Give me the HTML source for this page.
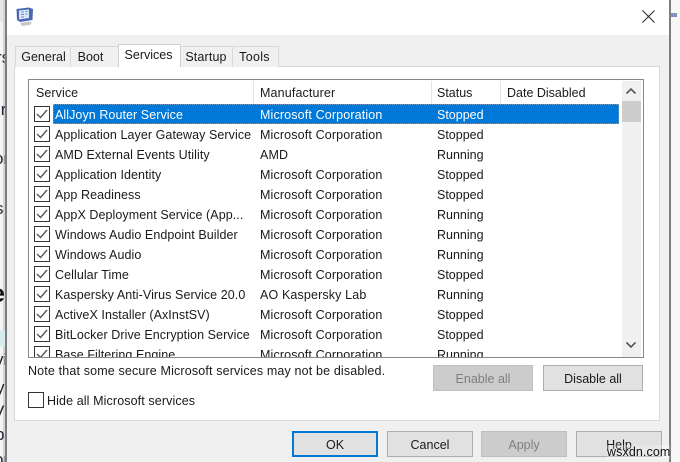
<!DOCTYPE html>
<html><head><meta charset="utf-8">
<style>
html,body{margin:0;padding:0;background:#fff}
#r{position:relative;width:680px;height:462px;overflow:hidden;background:#fff;font-family:"Liberation Sans",sans-serif;font-size:12.5px;color:#1a1a1a}
#r div{position:absolute;box-sizing:border-box}
.t{white-space:nowrap;line-height:16px;height:16px}
.tab{background:#f0f0f0;border:1px solid #d9d9d9;border-bottom:none;text-align:center;line-height:20px}
.cb{left:34px;width:16px;height:16px;border:1px solid #333;background:#fff}
.btn{background:#e1e1e1;border:1px solid #adadad;text-align:center;line-height:26px}
.dis{background:#cccccc;border-color:#bfbfbf;color:#7f7f7f}
.s{letter-spacing:.07px}
.m{letter-spacing:.14px}
svg{position:absolute;overflow:visible}
</style></head><body>
<div id="r">
<!-- left page background -->
<div style="left:0;top:0;width:6px;height:462px;background:#f4f4f4"></div>
<div style="left:0;top:0;width:6px;height:22px;background:#e6e6e6"></div>
<div style="left:3px;top:0;width:2px;height:462px;background:#d4d4d4"></div>
<div class="t" style="left:-4px;top:50px;font-size:17px;color:#333;width:9px;overflow:hidden">rs</div>
<div class="t" style="left:-3px;top:102px;font-size:17px;color:#223;width:8px;overflow:hidden">ir</div>
<div class="t" style="left:-6px;top:151px;font-size:17px;color:#223;width:11px;overflow:hidden">or</div>
<div class="t" style="left:-5px;top:201px;font-size:17px;color:#333;width:10px;overflow:hidden">s</div>
<div class="t" style="left:-9px;top:284px;font-size:25px;font-weight:bold;line-height:20px;height:20px;color:#111;width:14px;overflow:hidden">e</div>
<div style="left:0;top:330px;width:5px;height:16px;background:#d8ecef"></div>
<div class="t" style="left:-5px;top:352px;font-size:17px;color:#223;width:10px;overflow:hidden">vi</div>
<div class="t" style="left:-4px;top:380px;font-size:17px;color:#223;width:9px;overflow:hidden">y</div>
<div class="t" style="left:-7px;top:404px;font-size:17px;color:#223;width:12px;overflow:hidden">V</div>
<div class="t" style="left:-5px;top:427px;font-size:17px;color:#223;width:10px;overflow:hidden">b</div>
<div class="t" style="left:-6px;top:452px;font-size:17px;color:#223;width:11px;overflow:hidden">or</div>
<!-- right side background -->
<div style="left:670px;top:0;width:10px;height:462px;background:#f7f7f7"></div>
<div style="left:671px;top:13px;width:6px;height:4px;background:#7f93b8"></div>
<!-- dialog -->
<div style="left:5px;top:0;width:2px;height:462px;background:#7d7d7d"></div>
<div style="left:669px;top:0;width:2px;height:462px;background:#7d7d7d"></div>
<div style="left:7px;top:0;width:662px;height:35px;background:#fff"></div>
<div style="left:7px;top:35px;width:662px;height:427px;background:#f0f0f0"></div>
<!-- icon -->
<svg style="left:16px;top:7px" width="18" height="19" viewBox="0 0 18 19">
<path d="M0.500 2 L13 0.500 L17 2 L16.500 13 L4 15 L1 13Z" fill="#4a68b8"/>
<path d="M3 3.500 L13 2.500 L13 11 L3 12.500Z" fill="#dbe7f7"/>
<path d="M5 5h3M5 7.500h3M5 10h3M9.500 4.500h2M9.500 7h2" stroke="#6f8fd0" stroke-width="1.100"/>
<path d="M4 16 L13 14.500 L16 15.500 L14 18 L6 19Z" fill="#c8c8c8"/>
</svg>
<!-- close -->
<svg style="left:642px;top:10px" width="13" height="13" viewBox="0 0 13 13"><path d="M0.500 0.500L12.500 12.500M12.500 0.500L0.500 12.500" stroke="#222" stroke-width="1"/></svg>
<!-- panel -->
<div style="left:14px;top:66px;width:646px;height:355px;background:#fff;border:1px solid #d9d9d9"></div>
<!-- tabs -->
<div class="tab" style="left:15px;top:46px;width:56px;height:21px;border-right:none">General</div>
<div class="tab" style="left:70px;top:46px;width:48px;height:21px;border-left:1px solid #d9d9d9;border-right:none;padding-right:8px">Boot</div>
<div class="tab" style="left:118px;top:44px;width:63px;height:23px;background:#fff;border-color:#d0d0d0;z-index:2;line-height:20px;padding-right:2px">Services</div>
<div class="tab" style="left:180px;top:46px;width:53px;height:21px;border-right:none;letter-spacing:.15px;padding-right:2px">Startup</div>
<div class="tab" style="left:232px;top:46px;width:47px;height:21px;letter-spacing:.3px;padding-right:2px">Tools</div>
<!-- list -->
<div style="left:28px;top:79px;width:616px;height:279px;background:#fff;border:1px solid #828790;overflow:hidden" id="l">
<div style="left:224px;top:1px;width:1px;height:24px;background:#e5e5e5"></div>
<div style="left:402px;top:1px;width:1px;height:24px;background:#e5e5e5"></div>
<div style="left:471px;top:1px;width:1px;height:24px;background:#e5e5e5"></div>
<div class="t s" style="left:7px;top:5px">Service</div>
<div class="t m" style="left:231px;top:5px">Manufacturer</div>
<div class="t" style="left:408px;top:5px">Status</div>
<div class="t" style="left:478px;top:5px">Date Disabled</div>
<!-- selection -->
<div style="left:24px;top:24px;width:566px;height:20px;background:#0078d7;outline:1px dotted #7a9cc0;outline-offset:-1px"></div>
<!-- scrollbar -->
<div style="left:593px;top:1px;width:19px;height:276px;background:#f0f0f0"></div>
<div style="left:593px;top:21px;width:19px;height:21px;background:#cdcdcd"></div>
<svg style="left:597px;top:8px" width="10" height="6" viewBox="0 0 10 6"><path d="M0.500 5.500L5 1L9.500 5.500" fill="none" stroke="#555" stroke-width="1.600"/></svg>
<svg style="left:597px;top:262px" width="10" height="6" viewBox="0 0 10 6"><path d="M0.500 0.500L5 5L9.500 0.500" fill="none" stroke="#555" stroke-width="1.600"/></svg>
<!-- rows -->
<div class="t s" style="left:26px;top:27px;color:#fff">AllJoyn Router Service</div><div class="t m" style="left:231px;top:27px;color:#fff">Microsoft Corporation</div><div class="t" style="left:408px;top:27px;color:#fff">Stopped</div>
<div class="t s" style="left:26px;top:47px">Application Layer Gateway Service</div><div class="t m" style="left:231px;top:47px">Microsoft Corporation</div><div class="t" style="left:408px;top:47px">Stopped</div>
<div class="t s" style="left:26px;top:67px">AMD External Events Utility</div><div class="t m" style="left:231px;top:67px">AMD</div><div class="t" style="left:408px;top:67px">Running</div>
<div class="t s" style="left:26px;top:87px">Application Identity</div><div class="t m" style="left:231px;top:87px">Microsoft Corporation</div><div class="t" style="left:408px;top:87px">Stopped</div>
<div class="t s" style="left:26px;top:107px">App Readiness</div><div class="t m" style="left:231px;top:107px">Microsoft Corporation</div><div class="t" style="left:408px;top:107px">Stopped</div>
<div class="t s" style="left:26px;top:127px">AppX Deployment Service (App...</div><div class="t m" style="left:231px;top:127px">Microsoft Corporation</div><div class="t" style="left:408px;top:127px">Running</div>
<div class="t s" style="left:26px;top:147px">Windows Audio Endpoint Builder</div><div class="t m" style="left:231px;top:147px">Microsoft Corporation</div><div class="t" style="left:408px;top:147px">Running</div>
<div class="t s" style="left:26px;top:167px">Windows Audio</div><div class="t m" style="left:231px;top:167px">Microsoft Corporation</div><div class="t" style="left:408px;top:167px">Running</div>
<div class="t s" style="left:26px;top:187px">Cellular Time</div><div class="t m" style="left:231px;top:187px">Microsoft Corporation</div><div class="t" style="left:408px;top:187px">Stopped</div>
<div class="t s" style="left:26px;top:207px">Kaspersky Anti-Virus Service 20.0</div><div class="t m" style="left:231px;top:207px">AO Kaspersky Lab</div><div class="t" style="left:408px;top:207px">Running</div>
<div class="t s" style="left:26px;top:227px">ActiveX Installer (AxInstSV)</div><div class="t m" style="left:231px;top:227px">Microsoft Corporation</div><div class="t" style="left:408px;top:227px">Stopped</div>
<div class="t s" style="left:26px;top:247px">BitLocker Drive Encryption Service</div><div class="t m" style="left:231px;top:247px">Microsoft Corporation</div><div class="t" style="left:408px;top:247px">Stopped</div>
<div class="t s" style="left:26px;top:267px">Base Filtering Engine</div><div class="t m" style="left:231px;top:267px">Microsoft Corporation</div><div class="t" style="left:408px;top:267px">Running</div>
<!-- checkboxes -->
<svg style="left:5px;top:26px" width="16" height="260" viewBox="0 0 16 260" fill="none">
<g stroke="#333" stroke-width="1">
<rect x=".5" y=".5" width="15" height="15"/><rect x=".5" y="20.500" width="15" height="15"/><rect x=".5" y="40.500" width="15" height="15"/><rect x=".5" y="60.500" width="15" height="15"/><rect x=".5" y="80.500" width="15" height="15"/><rect x=".5" y="100.500" width="15" height="15"/><rect x=".5" y="120.500" width="15" height="15"/><rect x=".5" y="140.500" width="15" height="15"/><rect x=".5" y="160.500" width="15" height="15"/><rect x=".5" y="180.500" width="15" height="15"/><rect x=".5" y="200.500" width="15" height="15"/><rect x=".5" y="220.500" width="15" height="15"/><rect x=".5" y="240.500" width="15" height="15"/>
</g>
<g stroke="#555" stroke-width="1.400">
<path d="M3 8l3.500 3.500L13 4"/><path d="M3 28l3.500 3.500L13 24"/><path d="M3 48l3.500 3.500L13 44"/><path d="M3 68l3.500 3.500L13 64"/><path d="M3 88l3.500 3.500L13 84"/><path d="M3 108l3.500 3.500L13 104"/><path d="M3 128l3.500 3.500L13 124"/><path d="M3 148l3.500 3.500L13 144"/><path d="M3 168l3.500 3.500L13 164"/><path d="M3 188l3.500 3.500L13 184"/><path d="M3 208l3.500 3.500L13 204"/><path d="M3 228l3.500 3.500L13 224"/><path d="M3 248l3.500 3.500L13 244"/>
</g>
</svg>
</div>
<!-- note -->
<div class="t" style="left:28px;top:363px;letter-spacing:.15px">Note that some secure Microsoft services may not be disabled.</div>
<div class="btn dis" style="left:433px;top:365px;width:100px;height:26px">Enable all</div>
<div class="btn" style="left:543px;top:365px;width:100px;height:26px">Disable all</div>
<div class="cb" style="left:28px;top:392px"></div>
<div class="t" style="left:47px;top:393px;letter-spacing:.11px">Hide all Microsoft services</div>
<!-- bottom buttons -->
<div class="btn" style="left:292px;top:431px;width:86px;height:26px;border:2px solid #0078d7;line-height:25px">OK</div>
<div class="btn" style="left:387px;top:431px;width:86px;height:26px">Cancel</div>
<div class="btn dis" style="left:481px;top:431px;width:86px;height:26px">Apply</div>
<div class="btn" style="left:576px;top:431px;width:86px;height:26px">Help</div>
<div class="t" style="left:607px;top:445px;font-size:12.5px;color:#111;letter-spacing:.1px;background:rgba(255,255,255,.25);height:14px;line-height:14px">wsxdn.com</div>
</div>
</body></html>
